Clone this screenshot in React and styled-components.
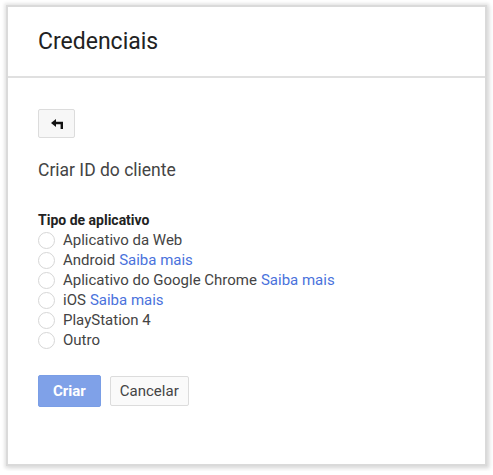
import React from 'react';
import styled, { createGlobalStyle } from 'styled-components';

const GlobalStyle = createGlobalStyle`
  body {
    margin: 0;
    background: #fff;
    font-family: Roboto, 'Liberation Sans', Arial, sans-serif;
  }
`;

const Page = styled.div`
  padding: 7px 8px;
`;

const Panel = styled.div`
  width: 477px;
  height: 457px;
  background: #fff;
  box-shadow: 0 0 0 2px #dadada, 0 0 3px 4px rgba(0, 0, 0, 0.08),
    2px 2px 5px 3px rgba(0, 0, 0, 0.08);
  display: flex;
  flex-direction: column;
`;

const Header = styled.div`
  height: 71px;
  border-bottom: 2px solid #e0e0e0;
  display: flex;
  align-items: center;
  padding-left: 30px;
  box-sizing: border-box;
  h2 {
    margin: 0;
    font-weight: 400;
    font-size: 23px;
    color: #222;
  }
`;

const Body = styled.div`
  padding: 31px 30px 0;
  display: flex;
  flex-direction: column;
  align-items: flex-start;
`;

const BackButton = styled.button`
  width: 37px;
  height: 29px;
  padding: 0;
  border: 1px solid #dcdcdc;
  border-radius: 2px;
  background: #f7f7f7;
  display: flex;
  align-items: center;
  justify-content: center;
`;

const Subtitle = styled.div`
  margin-top: 22px;
  font-size: 17.5px;
  color: #444;
`;

const Label = styled.div`
  margin-top: 32px;
  font-size: 14px;
  font-weight: 700;
  color: #222;
`;

const Options = styled.div`
  display: flex;
  flex-direction: column;
  margin-top: 2px;
`;

const Option = styled.label`
  display: flex;
  align-items: center;
  height: 20px;
  font-size: 15px;
  color: #444;
  a {
    color: #4a72dc;
    text-decoration: none;
    margin-left: 4px;
  }
`;

const Radio = styled.span`
  width: 15px;
  height: 15px;
  border: 1px solid #d6d6d6;
  border-radius: 50%;
  margin-right: 8px;
  background: #fff;
`;

const Actions = styled.div`
  display: flex;
  gap: 9px;
  margin-top: 25px;
`;

const Button = styled.button`
  height: ${(p) => (p.primary ? 32 : 30)}px;
  margin-top: ${(p) => (p.primary ? 0 : 1)}px;
  padding: 0 ${(p) => (p.primary ? 14 : 9)}px;
  font-family: Roboto, 'Liberation Sans', Arial, sans-serif;
  font-size: 15px;
  font-weight: ${(p) => (p.primary ? 700 : 400)};
  border-radius: 2px;
  border: 1px solid ${(p) => (p.primary ? '#7a9ee6' : '#dcdcdc')};
  background: ${(p) => (p.primary ? '#7fa1e8' : '#fafafa')};
  color: ${(p) => (p.primary ? '#fff' : '#444')};
`;

const options = [
  { label: 'Aplicativo da Web' },
  { label: 'Android', link: true },
  { label: 'Aplicativo do Google Chrome', link: true },
  { label: 'iOS', link: true },
  { label: 'PlayStation 4' },
  { label: 'Outro' },
];

const App = () => {
  return (
    <Page>
      <GlobalStyle />
      <Panel>
        <Header>
          <h2>Credenciais</h2>
        </Header>
        <Body>
          <BackButton>
            <svg width="12" height="10" viewBox="0 0 12 10">
              <path d="M4.5 4H10.8V10" fill="none" stroke="#111" strokeWidth="2.4" />
              <path d="M0 4L5 0V8Z" fill="#111" />
            </svg>
          </BackButton>
          <Subtitle>Criar ID do cliente</Subtitle>
          <Label>Tipo de aplicativo</Label>
          <Options>
            {options.map((o) => (
              <Option key={o.label}>
                <Radio />
                {o.label}
                {o.link && <a href="#">Saiba mais</a>}
              </Option>
            ))}
          </Options>
          <Actions>
            <Button primary>Criar</Button>
            <Button>Cancelar</Button>
          </Actions>
        </Body>
      </Panel>
    </Page>
  );
};

export default App;
